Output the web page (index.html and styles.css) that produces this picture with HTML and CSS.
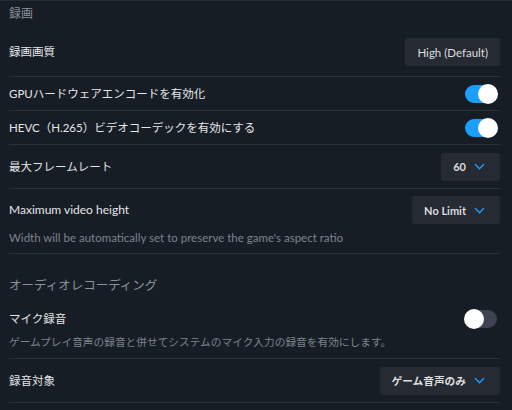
FILE: index.html
```html
<!DOCTYPE html>
<html lang="ja">
<head>
<meta charset="utf-8">
<link rel="stylesheet" href="styles.css">
</head>
<body>
<div class="page">
  <div class="section-title first">録画</div>

  <div class="row r-quality">
    <div class="label">録画画質</div>
    <button class="btn">High (Default)</button>
  </div>

  <div class="row r-toggle">
    <div class="label">GPUハードウェアエンコードを有効化</div>
    <span class="toggle on"><span class="knob"></span></span>
  </div>

  <div class="row r-toggle">
    <div class="label">HEVC（H.265）ビデオコーデックを有効にする</div>
    <span class="toggle on"><span class="knob"></span></span>
  </div>

  <div class="row r-drop">
    <div class="label">最大フレームレート</div>
    <button class="btn drop">60<svg class="chev" viewBox="0 0 12 8"><path d="M1 1.5 L6 6.5 L11 1.5" /></svg></button>
  </div>

  <div class="row r-desc">
    <div class="main">
      <div class="label latin">Maximum video height</div>
      <button class="btn drop">No Limit<svg class="chev" viewBox="0 0 12 8"><path d="M1 1.5 L6 6.5 L11 1.5" /></svg></button>
    </div>
    <div class="desc">Width will be automatically set to preserve the game's aspect ratio</div>
  </div>

  <div class="section-title second">オーディオレコーディング</div>

  <div class="row r-mic">
    <div class="main">
      <div class="label">マイク録音</div>
      <span class="toggle off"><span class="knob"></span></span>
    </div>
    <div class="desc jp">ゲームプレイ音声の録音と併せてシステムのマイク入力の録音を有効にします。</div>
  </div>

  <div class="row r-drop last">
    <div class="label">録音対象</div>
    <button class="btn drop jp">ゲーム音声のみ<svg class="chev" viewBox="0 0 12 8"><path d="M1 1.5 L6 6.5 L11 1.5" /></svg></button>
  </div>
</div>
</body>
</html>
```

FILE: styles.css
```css
html, body {
  margin: 0;
  padding: 0;
  background: #171d25;
}

body {
  width: 512px;
  height: 410px;
  overflow: hidden;
  font-family: Lato, "Noto Sans CJK JP", sans-serif;
  color: #dcdedf;
  border-top: 1px solid #262c35;
  box-sizing: border-box;
}

.page {
  padding: 0 12px 0 9px;
}

.section-title {
  color: #8b929a;
  font-size: 12px;
  line-height: 18px;
}

.section-title.first {
  padding-top: 4px;
  height: 23px;
}

.section-title.second {
  font-size: 12.5px;
  padding-top: 23px;
  height: 30px;
}

.row {
  border-bottom: 1px solid #2b3039;
  display: flex;
  align-items: center;
  justify-content: space-between;
}

.label {
  font-size: 11.5px;
  line-height: 18px;
  color: #e4e6e8;
}

.label.latin {
  font-size: 12px;
}

.r-quality {
  height: 48px;
}

.r-toggle {
  height: 33px;
}

.r-drop {
  height: 43px;
}

.r-desc,
.r-mic {
  flex-direction: column;
  align-items: stretch;
  justify-content: flex-start;
}

.r-desc {
  height: 64px;
}

.r-desc .main {
  height: 28px;
  margin-top: 7px;
  display: flex;
  align-items: center;
  justify-content: space-between;
}

.r-desc .desc {
  margin-top: 6px;
}

.r-mic {
  height: 51px;
}

.r-mic .main {
  height: 20px;
  margin-top: 2px;
  display: flex;
  align-items: center;
  justify-content: space-between;
}

.r-mic .desc {
  margin-top: 5px;
}

.desc {
  font-size: 11.5px;
  line-height: 16px;
  color: #7d848d;
}

.desc.jp {
  font-size: 10.7px;
}

.btn {
  font-family: inherit;
  background: #262a33;
  color: #dcdedf;
  border: none;
  border-radius: 3px;
  height: 28px;
  padding: 0 12px;
  font-size: 11.5px;
  display: flex;
  align-items: center;
  margin: 0;
}

.btn.drop {
  padding: 0 15px 0 12px;
  gap: 8px;
  font-weight: 700;
  font-size: 11px;
}

.btn.drop.jp {
  font-size: 10.7px;
}

.chev {
  width: 11px;
  height: 7px;
  fill: none;
  stroke: #1a9fff;
  stroke-width: 1.6;
}

.toggle {
  position: relative;
  width: 32px;
  height: 18px;
  border-radius: 9px;
  margin-right: 3px;
  display: inline-block;
}

.toggle.on {
  background: #1a9fff;
}

.toggle.off {
  background: #3d4450;
}

.knob {
  position: absolute;
  top: -1px;
  width: 20px;
  height: 20px;
  border-radius: 50%;
  background: #ffffff;
}

.toggle.on .knob {
  right: -1px;
}

.toggle.off .knob {
  left: -1px;
}
```
